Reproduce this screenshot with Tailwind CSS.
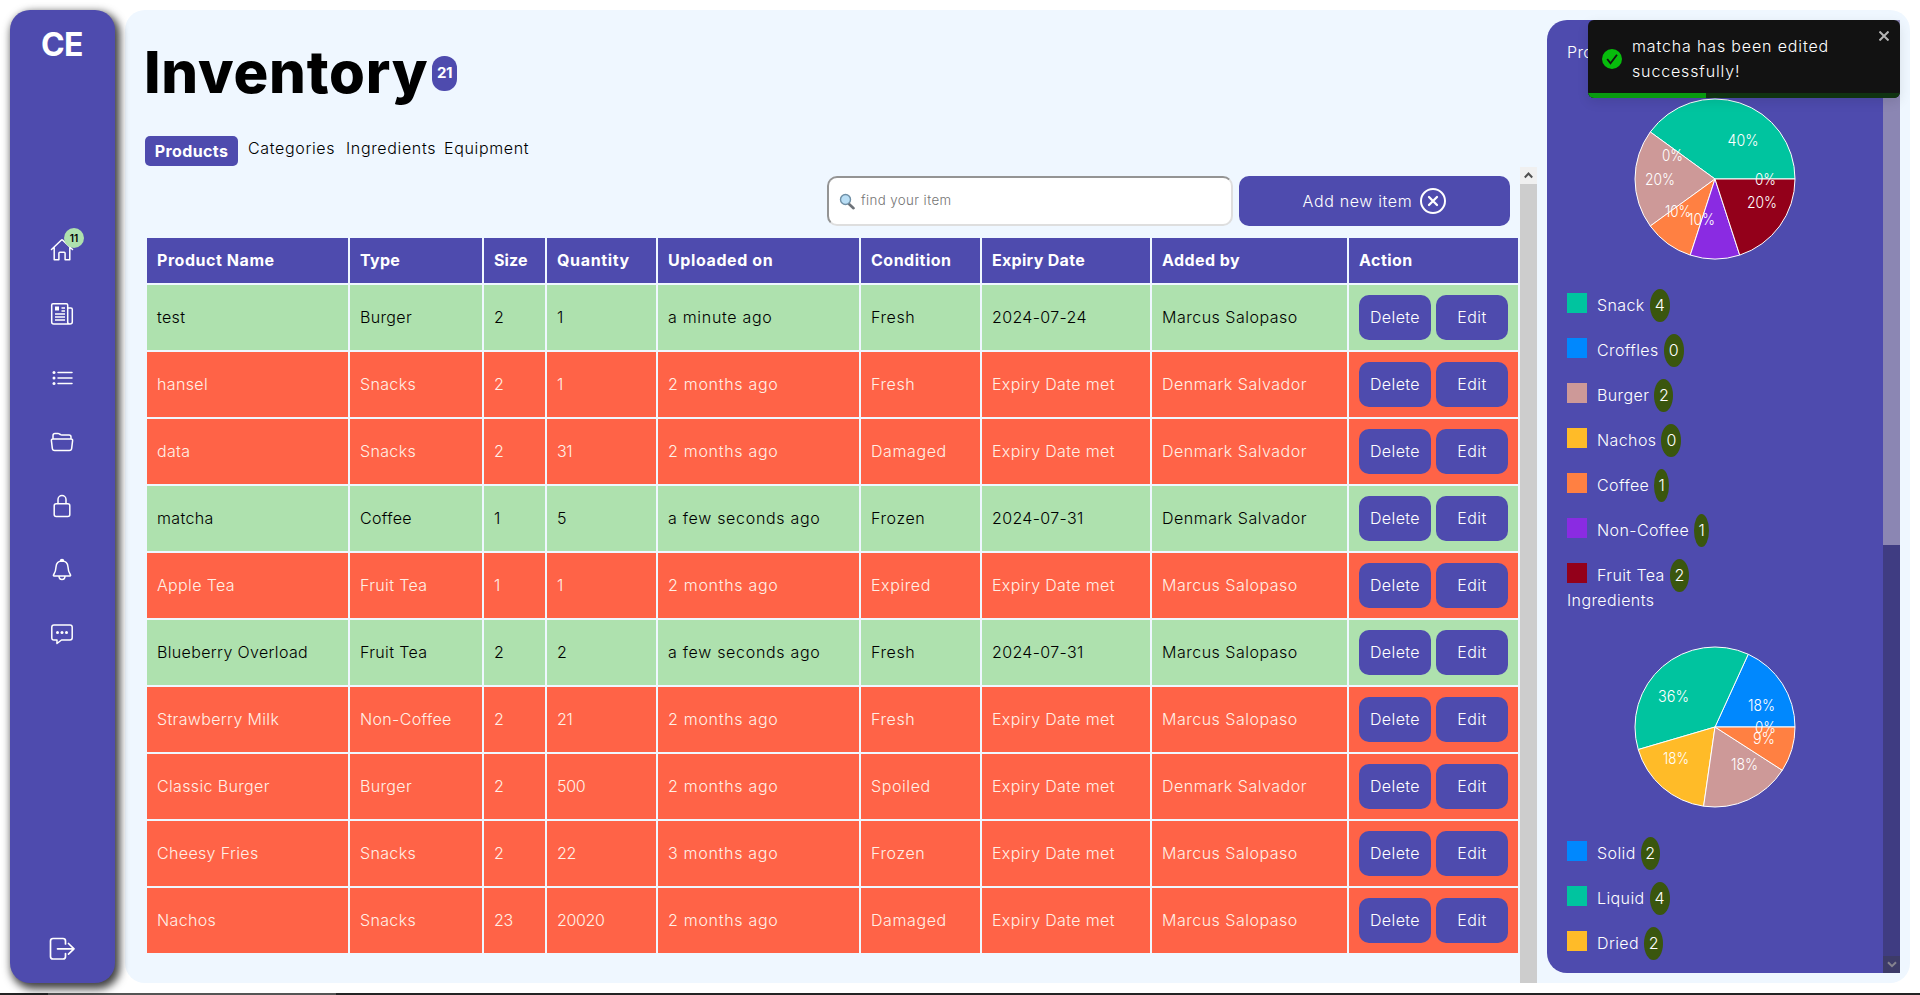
<!DOCTYPE html>
<html lang="en">
<head>
<meta charset="utf-8">
<title>Inventory</title>
<script src="https://cdn.jsdelivr.net/npm/@tailwindcss/browser@4"></script>
</head>
<body class="relative h-[995px] w-[1920px] overflow-hidden bg-white font-[Inter,sans-serif] text-base font-light tracking-[0.4px] text-black">
<div class="flex h-[993px] gap-[10px] p-[10px]">
  <nav class="relative flex w-[105px] shrink-0 flex-col items-center rounded-[20px] bg-[#4e4bae] pr-px text-white shadow-[3px_4px_9px_2px_rgba(0,0,0,0.75)]">
    <div class="mt-[14px] text-[32px] leading-[42px] font-bold tracking-[-0.5px]">CE</div>
    <div class="mt-[172px] flex flex-col items-center gap-[40px]">
      <div class="relative">
        <svg class="size-6" viewBox="0 0 24 24" fill="none" stroke="currentColor" stroke-width="1.5" stroke-linecap="round" stroke-linejoin="round"><path d="M1.500 11.500 11.200 2.200q.8-.7 1.600 0l9.700 9.300M4.200 9.500v12.200h4.700v-6.500q0-1 1-1h4.200q1 0 1 1v6.500h4.700V9.500"/></svg>
        <span class="absolute top-[-10px] left-[14px] flex size-5 items-center justify-center rounded-full bg-[#aee1ae] text-[10px] font-semibold tracking-normal text-black">11</span>
      </div>
      <svg class="size-6" viewBox="0 0 24 24" fill="none" stroke="currentColor" stroke-width="1.5" stroke-linejoin="round"><path d="M17.700 20.500V3q0-1.300-1.300-1.300H3Q1.700 1.700 1.700 3v17q0 2 2 2h16.200q-2.200 0-2.200-2V6h3.200q1.400 0 1.400 1.400V20q0 2-2.400 2"/><path d="M5 6.500h4" stroke-width="4"/><path d="M11.500 6h3.500M11.500 9h3.500M5 12h10M5 15h10M5 18h10"/></svg>
      <svg class="size-6" viewBox="0 0 24 24" fill="none" stroke="currentColor" stroke-width="1.5" stroke-linecap="round"><path d="M8 6.500h14M8 12h14M8 17.500h14"/><g fill="currentColor" stroke="none"><circle cx="4" cy="6.500" r="1.500"/><circle cx="4" cy="12" r="1.500"/><circle cx="4" cy="17.500" r="1.500"/></g></svg>
      <svg class="size-6" viewBox="0 0 24 24" fill="none" stroke="currentColor" stroke-width="1.500" stroke-linejoin="round"><path d="M3 9V5.500q0-2 2-2h3q.8 0 1.500.5l.8.500q.7.500 1.500.500h7.200q2 0 2 2V9M2.900 9h18.200q1.700 0 1.500 1.700l-.9 7.500q-.2 2.200-2.400 2.200H4.700q-2.200 0-2.400-2.200l-.9-7.500Q1.200 9 2.900 9z"/></svg>
      <svg class="size-6" viewBox="0 0 24 24" fill="none" stroke="currentColor" stroke-width="1.500"><rect x="4.200" y="9.700" width="15.600" height="12.800" rx="2"/><path d="M8 9.700V5.500a4 4 0 0 1 8 0v4.200"/></svg>
      <svg class="size-6" viewBox="0 0 24 24" fill="none" stroke="currentColor" stroke-width="1.500" stroke-linejoin="round"><path d="M12 3C8.200 3 6.200 5.800 6 9c-.2 4-1 5.500-2 7-1 1.500-.7 2 .3 2h15.400c1 0 1.300-.5.300-2-1-1.500-1.800-3-2-7-.2-3.200-2.200-6-6-6zM10.500 3a1.500 1.500 0 0 1 3 0M9 18a3 3.500 0 0 0 6 0"/></svg>
      <svg class="size-6" viewBox="0 0 24 24" fill="none" stroke="currentColor" stroke-width="1.500" stroke-linejoin="round"><path d="M4 3h16q2.200 0 2.200 2.200v10.600q0 2.200-2.200 2.200h-8.500L7 21.500V18H4q-2.200 0-2.200-2.200V5.200Q1.800 3 4 3z"/><g fill="currentColor" stroke="none"><circle cx="7.500" cy="10.500" r="1.500"/><circle cx="12" cy="10.500" r="1.500"/><circle cx="16.500" cy="10.500" r="1.500"/></g></svg>
    </div>
    <svg class="mt-auto mb-[21px] h-[26px] w-[26px]" viewBox="0 0 26 26" fill="none" stroke="currentColor" stroke-width="1.700" stroke-linecap="round" stroke-linejoin="round"><path d="M16.500 8V5q0-2.500-2.500-2.500H4Q1.500 2.500 1.500 5v15.500Q1.500 23 4 23h10q2.500 0 2.500-2.500v-3M8.500 12.800H25M19.500 7.500l5.500 5.300-5.500 5.300"/></svg>
  </nav>

  <main class="flex w-[1785px] rounded-[20px] bg-[#eff7ff]">
    <section class="flex w-[1412px] flex-col">
      <div class="flex h-[126px] items-start pl-[19px]">
        <h1 class="mt-[27px] w-[288px] text-[58px] leading-[70px] font-extrabold tracking-[0.8px] whitespace-nowrap">Inventory</h1>
        <span class="mt-[46px] flex h-[35px] w-[25px] items-center justify-center rounded-[12px] bg-[#4e4bae] text-[15px] font-bold tracking-[-0.5px] text-white">21</span>
      </div>
      <div class="flex h-[31px] items-start gap-[10px] pl-[20px] leading-[25px] tracking-[0.65px]">
        <span class="flex h-[30px] w-[93px] items-center justify-center rounded-[5px] bg-[#4e4bae] font-bold tracking-[0.4px] text-white">Products</span>
        <span class="w-[88px]">Categories</span><span class="w-[88px]">Ingredients</span><span>Equipment</span>
      </div>
      <div class="flex h-[816px]">
        <div class="w-[1395px] pt-[9px] pl-[20px]">
          <div class="flex justify-end gap-[6px] pr-[10px]">
            <div class="flex h-[50px] w-[406px] items-center rounded-[10px] border-2 border-t-[#949494] border-r-[#dedede] border-b-[#dedede] border-l-[#949494] bg-white pl-[10px] text-[13.3px] text-[#757575]">
              <svg class="mr-[5px] size-[17px]" viewBox="0 0 17 17"><path d="m10 11 4.500 4.200" stroke="#6d7278" stroke-width="2.600" stroke-linecap="round"/><circle cx="6.500" cy="6.500" r="5" fill="#b9def5" stroke="#6f8fa5" stroke-width="1.400"/></svg>find your item
            </div>
            <div class="flex h-[50px] w-[271px] items-center justify-center gap-[8px] rounded-[10px] bg-[#4e4bae] tracking-[0.65px] text-white">Add new item
              <svg class="size-[26px]" viewBox="0 0 26 26" fill="none" stroke="currentColor" stroke-width="2" stroke-linecap="round"><circle cx="13" cy="13" r="12"/><path d="m9 9 8 8M17 9l-8 8" stroke-width="2.300"/></svg>
            </div>
          </div>
          <table class="mt-[10px] w-[1375px] table-fixed border-separate border-spacing-[2px] text-left leading-[25px]">
            <colgroup><col class="w-[201px]"><col class="w-[132px]"><col class="w-[61px]"><col class="w-[109px]"><col class="w-[201px]"><col class="w-[119px]"><col class="w-[168px]"><col class="w-[195px]"><col class="w-[169px]"></colgroup>
            <thead><tr class="h-[45px] bg-[#4e4bae] text-white [&>th]:px-[10px] [&>th]:font-bold"><th class="tracking-[0.55px]">Product Name</th><th class="tracking-[0.3px]">Type</th><th class="tracking-[0.1px]">Size</th><th class="tracking-[0.65px]">Quantity</th><th class="tracking-[0.6px]">Uploaded on</th><th class="tracking-[0.5px]">Condition</th><th class="tracking-[0.3px]">Expiry Date</th><th class="tracking-[0.45px]">Added by</th><th class="tracking-[0.45px]">Action</th></tr></thead>
            <tbody id="rows"></tbody>
          </table>
        </div>
        <div class="flex w-[17px] flex-col bg-[#cdcdcd]">
          <div class="flex h-[17px] items-center justify-center bg-[#f0f0f0]"><svg class="h-[7px] w-[9px]" viewBox="0 0 9 7" fill="none" stroke="#505050" stroke-width="2"><path d="m.8 5.500 3.700-4 3.700 4"/></svg></div>
        </div>
      </div>
    </section>

    <aside class="relative mt-[10px] ml-[10px] flex h-[953px] w-[353px] overflow-hidden rounded-l-[20px] bg-[#4e4bae] text-white">
      <div class="w-[336px] pl-[20px] leading-[25px]">
        <div class="pt-[20px]">Products</div>
        <div class="flex h-[218px] pt-[34px] pl-[68px]">
          <svg class="size-[160px] overflow-visible tracking-normal" viewBox="0 0 160 160" stroke="#fff" stroke-linejoin="round">
            <path fill="#00c49f" d="M80 80H160A80 80 0 0 0 15.280 32.980z"/>
            <path fill="#cd9998" d="M80 80 15.280 32.980A80 80 0 0 0 15.280 127.020z"/>
            <path fill="#ff8042" d="M80 80 15.280 127.020A80 80 0 0 0 55.280 156.080z"/>
            <path fill="#8a2be2" d="M80 80 55.280 156.080A80 80 0 0 0 104.720 156.080z"/>
            <path fill="#93001a" d="M80 80 104.720 156.080A80 80 0 0 0 160 80z"/>
            <g fill="#fff" stroke="none"><text x="92.500" y="47" textLength="31" lengthAdjust="spacingAndGlyphs">40%</text><text x="27" y="62" textLength="21" lengthAdjust="spacingAndGlyphs">0%</text><text x="10" y="86" textLength="30" lengthAdjust="spacingAndGlyphs">20%</text><text x="30" y="118" textLength="26" lengthAdjust="spacingAndGlyphs">10%</text><text x="53" y="126" textLength="27" lengthAdjust="spacingAndGlyphs">10%</text><text x="120" y="86" textLength="21" lengthAdjust="spacingAndGlyphs">0%</text><text x="112" y="109" textLength="30" lengthAdjust="spacingAndGlyphs">20%</text></g>
          </svg>
        </div>
        <div id="legend-products"></div>
        <div class="mt-[-10px]">Ingredients</div>
        <div class="flex h-[218px] pt-[34px] pl-[68px]">
          <svg class="size-[160px] overflow-visible tracking-normal" viewBox="0 0 160 160" stroke="#fff" stroke-linejoin="round">
            <path fill="#0088fe" d="M80 80H160A80 80 0 0 0 113.230 7.230z"/>
            <path fill="#00c49f" d="M80 80 113.230 7.230A80 80 0 0 0 3.240 102.540z"/>
            <path fill="#ffbb28" d="M80 80 3.240 102.540A80 80 0 0 0 68.620 159.190z"/>
            <path fill="#cd9998" d="M80 80 68.620 159.190A80 80 0 0 0 147.300 123.250z"/>
            <path fill="#ff8042" d="M80 80 147.300 123.250A80 80 0 0 0 160 80z"/>
            <g fill="#fff" stroke="none"><text x="23" y="55" textLength="31" lengthAdjust="spacingAndGlyphs">36%</text><text x="113" y="64" textLength="27" lengthAdjust="spacingAndGlyphs">18%</text><text x="120" y="86" textLength="21" lengthAdjust="spacingAndGlyphs">0%</text><text x="118" y="97" textLength="22" lengthAdjust="spacingAndGlyphs">9%</text><text x="28" y="117" textLength="26" lengthAdjust="spacingAndGlyphs">18%</text><text x="96" y="123" textLength="27" lengthAdjust="spacingAndGlyphs">18%</text></g>
          </svg>
        </div>
        <div id="legend-ingredients"></div>
      </div>
      <div class="flex w-[17px] flex-col bg-[#3f3c82]">
        <div class="h-[525px] bg-[#8b86b3]"></div>
        <div class="mt-auto flex h-[17px] items-center justify-center bg-[#3d3b68]"><svg class="h-[7px] w-[10px]" viewBox="0 0 10 7" fill="none" stroke="#85838f" stroke-width="2"><path d="m1 1.200 4 4 4-4"/></svg></div>
      </div>
    </aside>
  </main>
</div>

<div class="flex h-[2px] bg-[#242424]"><div class="ml-[48px] w-[288px] bg-[#555]"></div></div>

<div class="absolute top-[20px] left-[1588px] flex h-[78px] w-[312px] overflow-hidden rounded-[6px] bg-[#121212] text-white shadow-[0_4px_12px_rgba(0,0,0,0.1)]">
  <svg class="mt-[29px] ml-[14px] size-5 shrink-0" viewBox="0 0 20 20"><circle cx="10" cy="10" r="10" fill="#07bc0c"/><path d="m5.200 10 3.300 4.200 6.500-8.500" fill="none" stroke="#121212" stroke-width="1.800"/></svg>
  <div class="mt-[14px] ml-[10px] w-[215px] leading-[25px] tracking-[0.85px]">matcha has been edited successfully!</div>
  <svg class="absolute top-[11px] right-[11px] size-[10px]" viewBox="0 0 10 10" stroke="#b5b5b5" stroke-width="2"><path d="m.5.500 9 9m0-9-9 9"/></svg>
  <div class="absolute inset-x-0 bottom-0 h-[5px] bg-[#103311]"><div class="h-full w-[118px] bg-[#089a10]"></div></div>
</div>

<script>
const rows = [
  ['test','Burger','2','1','a minute ago','Fresh','2024-07-24','Marcus Salopaso'],
  ['hansel','Snacks','2','1','2 months ago','Fresh','Expiry Date met','Denmark Salvador'],
  ['data','Snacks','2','31','2 months ago','Damaged','Expiry Date met','Denmark Salvador'],
  ['matcha','Coffee','1','5','a few seconds ago','Frozen','2024-07-31','Denmark Salvador'],
  ['Apple Tea','Fruit Tea','1','1','2 months ago','Expired','Expiry Date met','Marcus Salopaso'],
  ['Blueberry Overload','Fruit Tea','2','2','a few seconds ago','Fresh','2024-07-31','Marcus Salopaso'],
  ['Strawberry Milk','Non-Coffee','2','21','2 months ago','Fresh','Expiry Date met','Marcus Salopaso'],
  ['Classic Burger','Burger','2','500','2 months ago','Spoiled','Expiry Date met','Denmark Salvador'],
  ['Cheesy Fries','Snacks','2','22','3 months ago','Frozen','Expiry Date met','Marcus Salopaso'],
  ['Nachos','Snacks','23','20020','2 months ago','Damaged','Expiry Date met','Marcus Salopaso'],
];
const spacing = ['tracking-[0.35px]','tracking-[0.35px]','tracking-[-0.2px]','tracking-[-0.35px]','tracking-[0.7px]','tracking-[0.6px]','tracking-[0.35px]','tracking-[0.5px]'];
const button = label => `<button class="flex h-[45px] w-[72px] items-center justify-center rounded-[10px] bg-[#4e4bae] tracking-[0.4px] text-white">${label}</button>`;
document.getElementById('rows').innerHTML = rows.map(r => {
  const tone = r[6].startsWith('Expiry') ? 'bg-[#ff6347] text-[#fff0e6]' : 'bg-[#aee1ae] text-black';
  return `<tr class="h-[65px] ${tone}">${r.map((c, i) => `<td class="px-[10px] whitespace-nowrap ${spacing[i]}">${c}</td>`).join('')}<td class="px-[10px]"><div class="flex gap-[5px]">${button('Delete')}${button('Edit')}</div></td></tr>`;
}).join('');

const legend = (id, items) => {
  document.getElementById(id).innerHTML = items.map(([name, count, color, w]) =>
    `<div class="flex h-[45px] items-start"><span class="mt-[10px] mr-[10px] size-5" style="background:${color}"></span><span class="mt-[10px]">${name}</span><span class="mt-[6px] ml-[5px] flex h-[33px] items-center justify-center rounded-[50%] bg-[#3a560e] tracking-normal" style="width:${w}px">${count}</span></div>`).join('');
};
legend('legend-products', [['Snack',4,'#00c49f',20],['Croffles',0,'#0088fe',20],['Burger',2,'#cd9998',19],['Nachos',0,'#ffbb28',20],['Coffee',1,'#ff8042',15],['Non-Coffee',1,'#8a2be2',15],['Fruit Tea',2,'#93001a',19]]);
legend('legend-ingredients', [['Solid',2,'#0088fe',19],['Liquid',4,'#00c49f',20],['Dried',2,'#ffbb28',19]]);
</script>
</body>
</html>
